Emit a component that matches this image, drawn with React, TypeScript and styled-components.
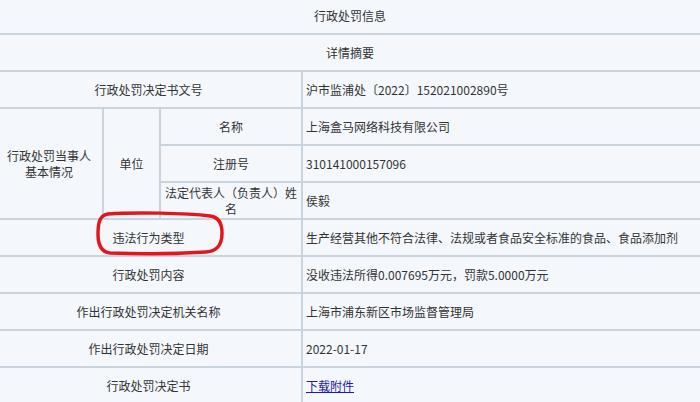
import React from "react";
import styled, { createGlobalStyle } from "styled-components";

const Global = createGlobalStyle`
  html, body { margin: 0; padding: 0; background: #f4f8fd; overflow: hidden; }
  body { font-family: "Noto Sans CJK SC", "Noto Sans", sans-serif; }
`;

const Frame = styled.div`
  position: relative;
  width: 700px;
  height: 402px;
  overflow: hidden;
`;

const Table = styled.table`
  border-collapse: collapse;
  table-layout: fixed;
  width: 712px;
  margin: -4px 0 0 -6px;
  background: #f4f8fd;
  font-size: 12px;
  line-height: 16px;
  color: #333;
`;

const Row = styled.tr`
  height: 37px;
`;

const Cell = styled.td<{ $align?: "left" | "center" }>`
  border: 2px solid #cad4de;
  padding: 0 3px;
  text-align: ${(p) => p.$align ?? "center"};
  vertical-align: middle;
  word-break: break-all;
`;

const Link = styled.a`
  color: #1d1ab4;
  text-decoration: underline;
  cursor: pointer;
`;

const Mark = styled.svg`
  position: absolute;
  left: 94px;
  top: 209px;
  width: 132px;
  height: 48px;
  pointer-events: none;
`;

type Pair = [string, React.ReactNode];

const afterRows: Pair[] = [
  ["违法行为类型", "生产经营其他不符合法律、法规或者食品安全标准的食品、食品添加剂"],
  ["行政处罚内容", "没收违法所得0.007695万元，罚款5.0000万元"],
  ["作出行政处罚决定机关名称", "上海市浦东新区市场监督管理局"],
  ["作出行政处罚决定日期", "2022-01-17"],
  ["行政处罚决定书", <Link>下载附件</Link>],
];

export default function App() {
  return (
    <Frame>
      <Global />
      <Table>
        <colgroup>
          <col style={{ width: 108 }} />
          <col style={{ width: 57 }} />
          <col style={{ width: 142 }} />
          <col />
        </colgroup>
        <tbody>
          <Row>
            <Cell colSpan={4}>行政处罚信息</Cell>
          </Row>
          <Row>
            <Cell colSpan={4}>详情摘要</Cell>
          </Row>
          <Row>
            <Cell colSpan={3}>行政处罚决定书文号</Cell>
            <Cell $align="left">沪市监浦处〔2022〕152021002890号</Cell>
          </Row>
          <Row>
            <Cell rowSpan={3}>
              行政处罚当事人
              <br />
              基本情况
            </Cell>
            <Cell rowSpan={3}>单位</Cell>
            <Cell>名称</Cell>
            <Cell $align="left">上海盒马网络科技有限公司</Cell>
          </Row>
          <Row>
            <Cell>注册号</Cell>
            <Cell $align="left">310141000157096</Cell>
          </Row>
          <Row>
            <Cell>法定代表人（负责人）姓名</Cell>
            <Cell $align="left">侯毅</Cell>
          </Row>
          {afterRows.map(([label, value]) => (
            <Row key={label}>
              <Cell colSpan={3}>{label}</Cell>
              <Cell $align="left">{value}</Cell>
            </Row>
          ))}
        </tbody>
      </Table>
      <Mark viewBox="0 0 132 48">
        <path
          d="M14 5 C40 3, 92 4, 116 7 C125 8, 128 15, 128 24 C128 35, 124 42, 112 43 C82 45, 42 45, 16 44 C7 43, 4 36, 4 25 C4 13, 6 6, 14 5 Z"
          fill="none"
          stroke="#e3161e"
          strokeWidth="3.5"
          strokeLinejoin="round"
        />
      </Mark>
    </Frame>
  );
}
